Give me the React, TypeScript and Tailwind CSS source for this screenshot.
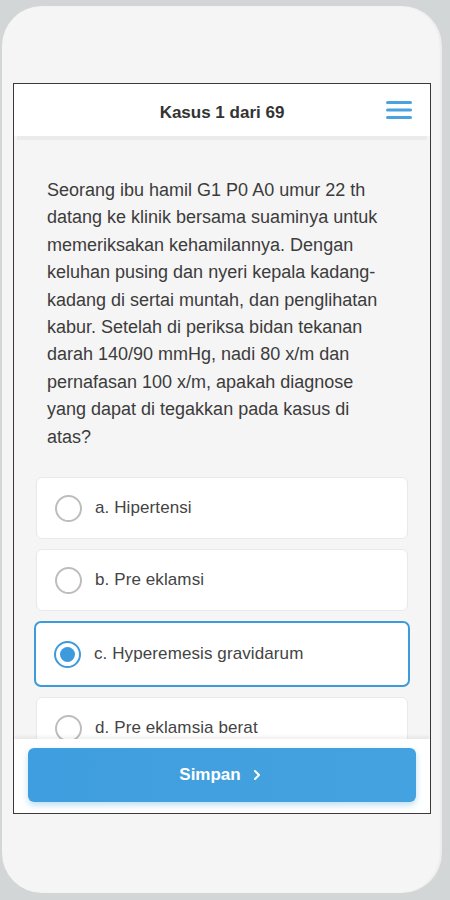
import { ChevronRight } from "lucide-react";

const options = [
  { key: "a", label: "a. Hipertensi" },
  { key: "b", label: "b. Pre eklamsi" },
  { key: "c", label: "c. Hyperemesis gravidarum" },
  { key: "d", label: "d. Pre eklamsia berat" },
];

const selected = "c";

export default function App() {
  return (
    <div className="w-[450px] h-[900px] bg-[#d3d6d6] pt-[6px] pl-[2px] overflow-hidden font-['Liberation_Sans',Arial,sans-serif]">
      {/* phone frame */}
      <div className="w-[440px] h-[887px] rounded-[40px] bg-[#f5f5f5] pt-[77px] pl-[11px] shadow-[inset_-2px_0_2px_rgba(0,0,0,0.04)]">
        {/* screen */}
        <div className="w-[418px] h-[731px] border border-[#3a3a3a] bg-[#f5f5f5] flex flex-col overflow-hidden">
          {/* header */}
          <div className="h-[52px] shrink-0 bg-white flex items-center">
            <div className="w-[44px]" />
            <div className="flex-1 pt-[6px] text-center text-[17px] font-bold text-[#333]">Kasus 1 dari 69</div>
            <div className="w-[44px] flex items-center">
              <svg width="26" height="20" viewBox="0 0 26 20">
                <path d="M1.5 2.5h23M1.5 10h23M1.5 17.5h23" stroke="#4aa3df" strokeWidth="3" strokeLinecap="round" />
              </svg>
            </div>
          </div>
          <div className="h-[4px] shrink-0 mx-[3px] bg-[#ebebeb]" />

          {/* content */}
          <div className="flex-1 overflow-hidden">
            <p className="pt-[37px] px-[33px] text-[18px] leading-[27.4px] text-[#3c3c3c]">
              Seorang ibu hamil G1 P0 A0 umur 22 th datang ke klinik bersama suaminya untuk memeriksakan kehamilannya. Dengan keluhan pusing dan nyeri kepala kadang-kadang di sertai muntah, dan penglihatan kabur. Setelah di periksa bidan tekanan darah 140/90 mmHg, nadi 80 x/m dan pernafasan 100 x/m, apakah diagnose yang dapat di tegakkan pada kasus di atas?
            </p>

            <div className="mt-[26px] px-[22px] flex flex-col gap-[10px]">
              {options.map((o) =>
                o.key === selected ? (
                  <div
                    key={o.key}
                    className="h-[66px] -mx-[2px] rounded-[7px] border-2 border-[#3d9bdb] bg-white flex items-center pl-[18px] gap-[13px]"
                  >
                    <div className="w-[27px] h-[27px] rounded-full border-[2.5px] border-[#3d9bdb] flex items-center justify-center">
                      <div className="w-[15px] h-[15px] rounded-full bg-[#3d9bdb]" />
                    </div>
                    <span className="text-[17px] tracking-[0.1px] text-[#444]">{o.label}</span>
                  </div>
                ) : (
                  <div
                    key={o.key}
                    className="h-[62px] rounded-[6px] border border-[#e9e9e9] bg-white flex items-center pl-[18px] gap-[13px]"
                  >
                    <div className="w-[27px] h-[27px] rounded-full border-2 border-[#bdbdbd]" />
                    <span className="text-[17px] tracking-[0.1px] text-[#444]">{o.label}</span>
                  </div>
                )
              )}
            </div>
          </div>

          {/* footer */}
          <div className="h-[74px] shrink-0 bg-white px-[14px] pt-[9px] relative shadow-[0_-3px_3px_rgba(0,0,0,0.05)]">
            <button className="w-full h-[54px] rounded-[6px] bg-gradient-to-r from-[#3f9edf] to-[#45a2e0] shadow-[0_3px_6px_rgba(66,160,222,0.35)] flex items-center justify-center gap-[8px] text-white text-[17px] font-bold">
              <span>Simpan</span>
              <ChevronRight size={16} strokeWidth={3} />
            </button>
          </div>
        </div>
      </div>
    </div>
  );
}
